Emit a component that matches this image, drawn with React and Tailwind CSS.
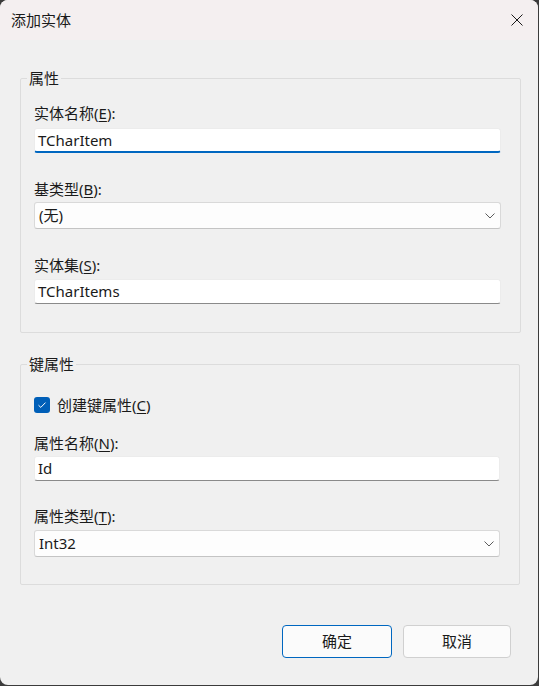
const font = { fontFamily: '"Noto Sans", "Noto Sans CJK SC", sans-serif' }

function Label({ text, keyChar, className = '' }) {
  return (
    <div className={`text-[15px] leading-5 text-[#1a1a1a] ${className}`}>
      {text}(<span className="underline underline-offset-2">{keyChar}</span>):
    </div>
  )
}

function TextBox({ value, focused }) {
  return (
    <div
      className={`h-[25px] bg-white border border-[#ececec] rounded-[3px] flex items-center px-[3px] text-[15px] text-[#1a1a1a] ${
        focused ? 'border-b-2 border-b-[#0067c0]' : 'border-b-[#8a8a8a]'
      }`}
    >
      {value}
    </div>
  )
}

function Combo({ value }) {
  return (
    <div className="h-[27px] bg-[#fdfdfd] border border-[#d9d9d9] border-b-[#c4c4c4] rounded-[3px] flex items-center justify-between pl-[4px] pr-[5px] text-[15px] text-[#1a1a1a]">
      <span>{value}</span>
      <svg width="10" height="6" viewBox="0 0 10 6" fill="none">
        <path d="M0.5 0.5 L5 5 L9.5 0.5" stroke="#5c5c5c" strokeWidth="1" />
      </svg>
    </div>
  )
}

function Group({ title, children, className = '' }) {
  return (
    <fieldset className={`border border-[#dcdcdc] rounded-[2px] pl-[13px] pr-[19px] ${className}`}>
      <legend className="ml-[-7px] px-[2px] text-[15px] leading-5 text-[#1a1a1a]">{title}</legend>
      {children}
    </fieldset>
  )
}

export default function App() {
  return (
    <div className="w-[539px] h-[686px] bg-[#3b3b3b]" style={font}>
      <div className="w-[538px] h-[685px] rounded-[8px] overflow-hidden bg-[#f0f0f0] flex flex-col">
        <div className="h-[40px] bg-[#f4eff0] flex items-center justify-between pl-[11px] pr-[15px] shrink-0">
          <span className="text-[15px] text-[#1a1a1a]">添加实体</span>
          <svg width="12" height="12" viewBox="0 0 12 12" fill="none">
            <path d="M0.5 0.5 L11.5 11.5 M11.5 0.5 L0.5 11.5" stroke="#1a1a1a" strokeWidth="1" />
          </svg>
        </div>

        <div className="pl-[20px] pr-[17px] pt-[28px] flex flex-col">
          <Group title="属性" className="pt-[15px] pb-[28px]">
            <Label text="实体名称" keyChar="E" />
            <div className="mt-[5px]">
              <TextBox value="TCharItem" focused />
            </div>
            <Label text="基类型" keyChar="B" className="mt-[26px]" />
            <div className="mt-[3px]">
              <Combo value="(无)" />
            </div>
            <Label text="实体集" keyChar="S" className="mt-[26px]" />
            <div className="mt-[4px]">
              <TextBox value="TCharItems" />
            </div>
          </Group>

          <Group title="键属性" className="mt-[21px] pt-[21px] pb-[27px] mr-[1px]">
            <div className="flex items-center gap-[7px]">
              <div className="w-[16px] h-[16px] rounded-[3px] bg-[#005fb8] flex items-center justify-center">
                <svg width="10" height="8" viewBox="0 0 10 8" fill="none">
                  <path d="M1.5 4.2 L3.8 6.4 L8.5 1.6" stroke="#ffffff" strokeWidth="1" />
                </svg>
              </div>
              <span className="text-[15px] leading-5 text-[#1a1a1a]">
                创建键属性(<span className="underline underline-offset-2">C</span>)
              </span>
            </div>
            <Label text="属性名称" keyChar="N" className="mt-[18px]" />
            <div className="mt-[3px]">
              <TextBox value="Id" />
            </div>
            <Label text="属性类型" keyChar="T" className="mt-[25px]" />
            <div className="mt-[4px]">
              <Combo value="Int32" />
            </div>
          </Group>

          <div className="flex justify-end gap-[11px] mt-[40px] pr-[10px]">
            <button className="w-[110px] h-[33px] rounded-[4px] bg-[#fbfbfb] border border-[#0067c0] text-[15px] text-[#1a1a1a]">
              确定
            </button>
            <button className="w-[108px] h-[33px] rounded-[4px] bg-[#fbfbfb] border border-[#d0d0d0] text-[15px] text-[#1a1a1a]">
              取消
            </button>
          </div>
        </div>
      </div>
    </div>
  )
}
